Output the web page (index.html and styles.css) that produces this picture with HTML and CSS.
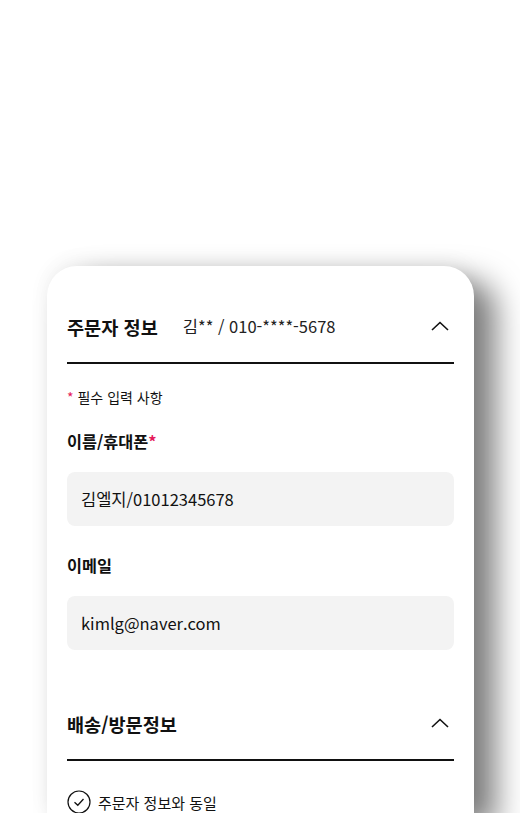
FILE: index.html
```html
<!DOCTYPE html>
<html lang="ko">
<head>
    <meta charset="UTF-8">
    <meta name="viewport" content="width=device-width, initial-scale=1.0">
    <title>주문서 작성</title>
    <link rel="stylesheet" href="styles.css">
</head>
<body>
    <div class="sheet">
        <section class="block">
            <div class="block-head">
                <h2 class="block-title">주문자 정보</h2>
                <span class="block-summary">김** / 010-****-5678</span>
                <svg class="chevron" width="18" height="10" viewBox="0 0 18 10">
                    <path d="M1 9L9 1.5L17 9" fill="none" stroke="#111" stroke-width="1.6"/>
                </svg>
            </div>
            <div class="block-body">
                <p class="note"><span class="req">*</span> 필수 입력 사항</p>
                <label class="field-label">이름/휴대폰<span class="req">*</span></label>
                <div class="field">김엘지/01012345678</div>
                <label class="field-label">이메일</label>
                <div class="field">kimlg@naver.com</div>
            </div>
        </section>

        <section class="block">
            <div class="block-head">
                <h2 class="block-title">배송/방문정보</h2>
                <svg class="chevron" width="18" height="10" viewBox="0 0 18 10">
                    <path d="M1 9L9 1.5L17 9" fill="none" stroke="#111" stroke-width="1.6"/>
                </svg>
            </div>
            <div class="block-body">
                <label class="check">
                    <svg width="24" height="24" viewBox="0 0 24 24">
                        <circle cx="12" cy="12" r="11" fill="none" stroke="#111" stroke-width="1.2"/>
                        <path d="M7.5 12.2L10.8 15.3L16.5 9" fill="none" stroke="#111" stroke-width="1.3"/>
                    </svg>
                    주문자 정보와 동일
                </label>
            </div>
        </section>
    </div>
</body>
</html>
```

FILE: styles.css
```css
html, body {
    height: 100%;
}

body {
    margin: 0;
    background-color: #fff;
    font-family: "Noto Sans CJK KR", "Noto Sans", sans-serif;
    color: #111;
    overflow: hidden;
}

.sheet {
    box-sizing: border-box;
    width: 427px;
    height: 547px;
    margin: 266px 0 0 47px;
    padding: 40px 20px 0 20px;
    overflow: hidden;
    background-color: #fff;
    border-radius: 30px 30px 0 0;
    box-shadow: 0 -4px 20px rgba(0, 0, 0, 0.06), 22px 14px 30px rgba(0, 0, 0, 0.5);
}

.block-head {
    display: flex;
    align-items: center;
    height: 40px;
    padding-bottom: 16px;
    border-bottom: 2px solid #111;
}

.block-title {
    margin: 0;
    font-size: 18.6px;
    font-weight: 700;
}

.block-summary {
    margin-left: 25px;
    font-size: 16.5px;
    color: #222;
}

.chevron {
    margin-left: auto;
    margin-right: 5px;
}

.block-body {
    padding: 23px 0 26px 0;
}

.note {
    margin: 0 0 22px 0;
    font-size: 14px;
}

.req {
    color: #e5195a;
}

.field-label {
    display: block;
    font-size: 16.3px;
    font-weight: 700;
    margin-bottom: 19px;
}

.field {
    height: 54px;
    line-height: 54px;
    padding: 0 14px;
    margin-bottom: 27px;
    background-color: #f3f3f3;
    border-radius: 8px;
    font-size: 16.5px;
}

.check {
    display: flex;
    align-items: center;
    gap: 7px;
    font-size: 15px;
    margin-top: 6px;
}
```
